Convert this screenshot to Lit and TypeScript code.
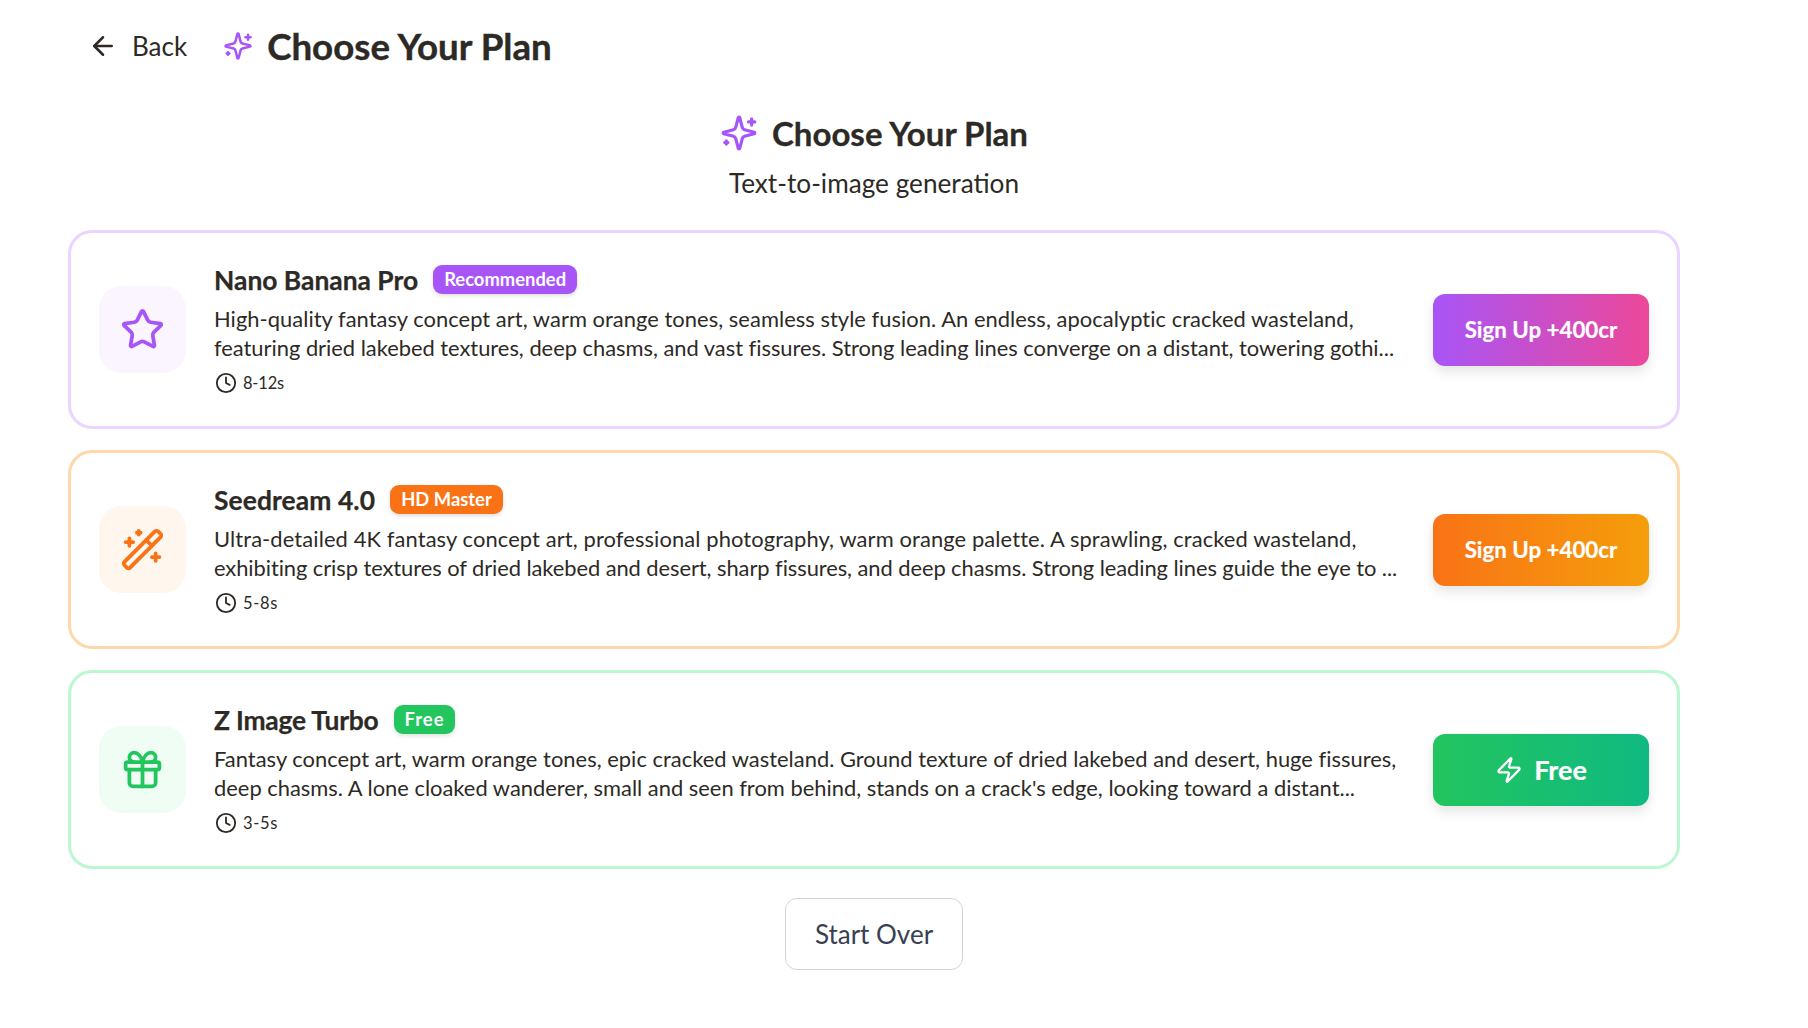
import { LitElement, html, css, svg } from "lit";
import { customElement } from "lit/decorators.js";

const icon = (size: number, body: unknown, sw = 2) => html`<svg class="ic" width=${size} height=${size} viewBox="0 0 24 24" fill="none" stroke="currentColor" stroke-width=${sw} stroke-linecap="round" stroke-linejoin="round">${body}</svg>`;

const sparkles = svg`<path d="M9.937 15.5A2 2 0 0 0 8.5 14.063l-6.135-1.582a.5.5 0 0 1 0-.962L8.5 9.936A2 2 0 0 0 9.937 8.5l1.582-6.135a.5.5 0 0 1 .963 0L14.063 8.5A2 2 0 0 0 15.5 9.937l6.135 1.581a.5.5 0 0 1 0 .964L15.5 14.063a2 2 0 0 0-1.437 1.437l-1.582 6.135a.5.5 0 0 1-.963 0z"/><path d="M20 3v4"/><path d="M22 5h-4"/><path d="M4 17v2"/><path d="M5 18H3"/>`;
const star = svg`<path d="M11.525 2.295a.53.53 0 0 1 .95 0l2.31 4.679a2.123 2.123 0 0 0 1.595 1.16l5.166.756a.53.53 0 0 1 .294.904l-3.736 3.638a2.123 2.123 0 0 0-.611 1.878l.882 5.14a.53.53 0 0 1-.771.56l-4.618-2.428a2.122 2.122 0 0 0-1.973 0L6.396 21.01a.53.53 0 0 1-.77-.56l.881-5.139a2.122 2.122 0 0 0-.611-1.879L2.16 9.795a.53.53 0 0 1 .294-.906l5.165-.755a2.122 2.122 0 0 0 1.597-1.16z"/>`;
const wand = svg`<path d="m21.64 3.64-1.28-1.28a1.21 1.21 0 0 0-1.72 0L2.36 18.64a1.21 1.21 0 0 0 0 1.72l1.28 1.28a1.2 1.2 0 0 0 1.72 0L21.64 5.36a1.2 1.2 0 0 0 0-1.72"/><path d="m14 7 3 3"/><path d="M5 6v4"/><path d="M19 14v4"/><path d="M10 2v2"/><path d="M7 8H3"/><path d="M21 16h-4"/><path d="M11 3H9"/>`;
const gift = svg`<rect x="3" y="8" width="18" height="4" rx="1"/><path d="M12 8v13"/><path d="M19 12v7a2 2 0 0 1-2 2H7a2 2 0 0 1-2-2v-7"/><path d="M7.5 8a2.5 2.5 0 0 1 0-5A4.8 8 0 0 1 12 8a4.8 8 0 0 1 4.5-5 2.5 2.5 0 0 1 0 5"/>`;
const zap = svg`<path d="M4 14a1 1 0 0 1-.78-1.63l9.9-10.2a.5.5 0 0 1 .86.46l-1.92 6.02A1 1 0 0 0 13 10h7a1 1 0 0 1 .78 1.63l-9.9 10.2a.5.5 0 0 1-.86-.46l1.92-6.02A1 1 0 0 0 11 14z"/>`;
const clock = svg`<circle cx="12" cy="12" r="10"/><polyline points="12 6 12 12 16 14"/>`;
const arrow = svg`<path d="m12 19-7-7 7-7"/><path d="M19 12H5"/>`;

const plans = [
  { cls: "purple", ic: star, name: "Nano Banana Pro", tag: "Recommended", time: "8-12s", cta: "Sign Up +400cr", zap: false, nameLs: 0, ls1: 0.04, ls2: -0.02, tagLs: 0, timeLs: -0.2,
    l1: "High-quality fantasy concept art, warm orange tones, seamless style fusion. An endless, apocalyptic cracked wasteland,",
    l2: "featuring dried lakebed textures, deep chasms, and vast fissures. Strong leading lines converge on a distant, towering gothi..." },
  { cls: "orange", ic: wand, name: "Seedream 4.0", tag: "HD Master", time: "5-8s", cta: "Sign Up +400cr", zap: false, nameLs: 0.1, ls1: 0.11, ls2: -0.07, tagLs: 0, timeLs: 0.7,
    l1: "Ultra-detailed 4K fantasy concept art, professional photography, warm orange palette. A sprawling, cracked wasteland,",
    l2: "exhibiting crisp textures of dried lakebed and desert, sharp fissures, and deep chasms. Strong leading lines guide the eye to ..." },
  { cls: "green", ic: gift, name: "Z Image Turbo", tag: "Free", time: "3-5s", cta: "Free", zap: true, nameLs: -0.2, ls1: 0.02, ls2: 0, tagLs: 1, timeLs: 0.7,
    l1: "Fantasy concept art, warm orange tones, epic cracked wasteland. Ground texture of dried lakebed and desert, huge fissures,",
    l2: "deep chasms. A lone cloaked wanderer, small and seen from behind, stands on a crack's edge, looking toward a distant..." },
];

@customElement("app-root")
export class AppRoot extends LitElement {
  static styles = css`
    :host { display: block; width: 1808px; height: 1028px; background: #fff; color: #2d2a26; font-family: Lato, "Open Sans", sans-serif; overflow: hidden; }
    .ic { display: block; flex: none; }
    .page { padding: 0 128px 0 68px; display: flex; flex-direction: column; }
    .top { display: flex; align-items: center; height: 92px; padding-left: 20px; }
    .back { display: flex; align-items: center; gap: 14px; font-size: 26px; }
    .top .spark { color: #a855f7; margin-left: 36px; }
    h1 { margin: 0 0 0 14px; font-size: 36.7px; line-height: 44px; font-weight: 700; -webkit-text-stroke: .4px #2d2a26; }
    .head { display: flex; flex-direction: column; align-items: center; margin-top: 19px; }
    .head-row { display: flex; align-items: center; gap: 14px; height: 44px; }
    .head-row .spark { color: #a855f7; }
    h2 { margin: 0; font-size: 33px; line-height: 40px; font-weight: 700; -webkit-text-stroke: .3px #2d2a26; }
    .sub { font-size: 26.2px; line-height: 32px; margin-top: 12px; }
    .cards { display: flex; flex-direction: column; gap: 21px; margin-top: 31px; }
    .card { box-sizing: border-box; height: 199px; border: 3px solid; border-radius: 24px; padding: 0 28px 0 28px; display: flex; align-items: center; background: #fff; }
    .purple { border-color: #e9d5ff; --c: #a855f7; --bg: #faf5ff; --grad: linear-gradient(90deg, #a855f7, #ec4899); }
    .orange { border-color: #fed7aa; --c: #f97316; --bg: #fff7ed; --grad: linear-gradient(90deg, #f97316, #f59e0b); }
    .green { border-color: #bbf7d0; --c: #22c55e; --bg: #f0fdf4; --grad: linear-gradient(90deg, #22c55e, #10b981); }
    .tile { width: 87px; height: 87px; border-radius: 22px; background: var(--bg); color: var(--c); display: flex; align-items: center; justify-content: center; flex: none; }
    .body { flex: 1; min-width: 0; margin-left: 28px; padding-bottom: 1px; }
    .name-row { display: flex; align-items: center; gap: 15px; height: 32px; }
    .name { font-size: 26.4px; font-weight: 700; line-height: 32px; -webkit-text-stroke: .25px #2d2a26; }
    .tag { background: var(--c); color: #fff; font-size: 18.4px; font-weight: 700; line-height: 21px; padding: 4px 11px; border-radius: 9px; box-shadow: 0 2px 4px rgba(0,0,0,.12); }
    .desc { font-size: 21.9px; line-height: 29px; margin-top: 8px; white-space: nowrap; }
    .desc span { display: block; }
    .meta { display: flex; align-items: center; gap: 6px; font-size: 16.5px; line-height: 24px; margin-top: 9px; padding-left: 1px; }
    .cta { width: 216px; height: 72px; flex: none; border-radius: 12px; background: var(--grad); color: #fff; font-size: 22.3px; font-weight: 700; display: flex; align-items: center; justify-content: center; gap: 11px; box-shadow: 0 6px 12px rgba(0,0,0,.1); -webkit-text-stroke: .2px #fff; }
    .cta.big { font-size: 27px; }
    .foot { display: flex; justify-content: center; margin-top: 29px; }
    .over { box-sizing: border-box; width: 178px; height: 72px; display: flex; align-items: center; justify-content: center; border: 1px solid #d1d5db; border-radius: 12px; font-size: 26px; color: #374151; }
  `;

  render() {
    return html`<div class="page">
      <div class="top">
        <div class="back">${icon(30, arrow)}<span>Back</span></div>
        <span class="spark">${icon(30, sparkles)}</span>
        <h1>Choose Your Plan</h1>
      </div>
      <div class="head">
        <div class="head-row"><span class="spark">${icon(38, sparkles)}</span><h2>Choose Your Plan</h2></div>
        <div class="sub">Text-to-image generation</div>
      </div>
      <div class="cards">
        ${plans.map((p) => html`<div class="card ${p.cls}">
          <div class="tile">${icon(45, p.ic)}</div>
          <div class="body">
            <div class="name-row"><span class="name" style="letter-spacing:${p.nameLs}px">${p.name}</span><span class="tag" style="letter-spacing:${p.tagLs}px">${p.tag}</span></div>
            <div class="desc"><span style="letter-spacing:${p.ls1}px">${p.l1}</span><span style="letter-spacing:${p.ls2}px">${p.l2}</span></div>
            <div class="meta">${icon(22, clock)}<span style="letter-spacing:${p.timeLs}px">${p.time}</span></div>
          </div>
          <div class="cta ${p.zap ? "big" : ""}">${p.zap ? icon(28, zap) : ""}<span>${p.cta}</span></div>
        </div>`)}
      </div>
      <div class="foot"><div class="over">Start Over</div></div>
    </div>`;
  }
}
